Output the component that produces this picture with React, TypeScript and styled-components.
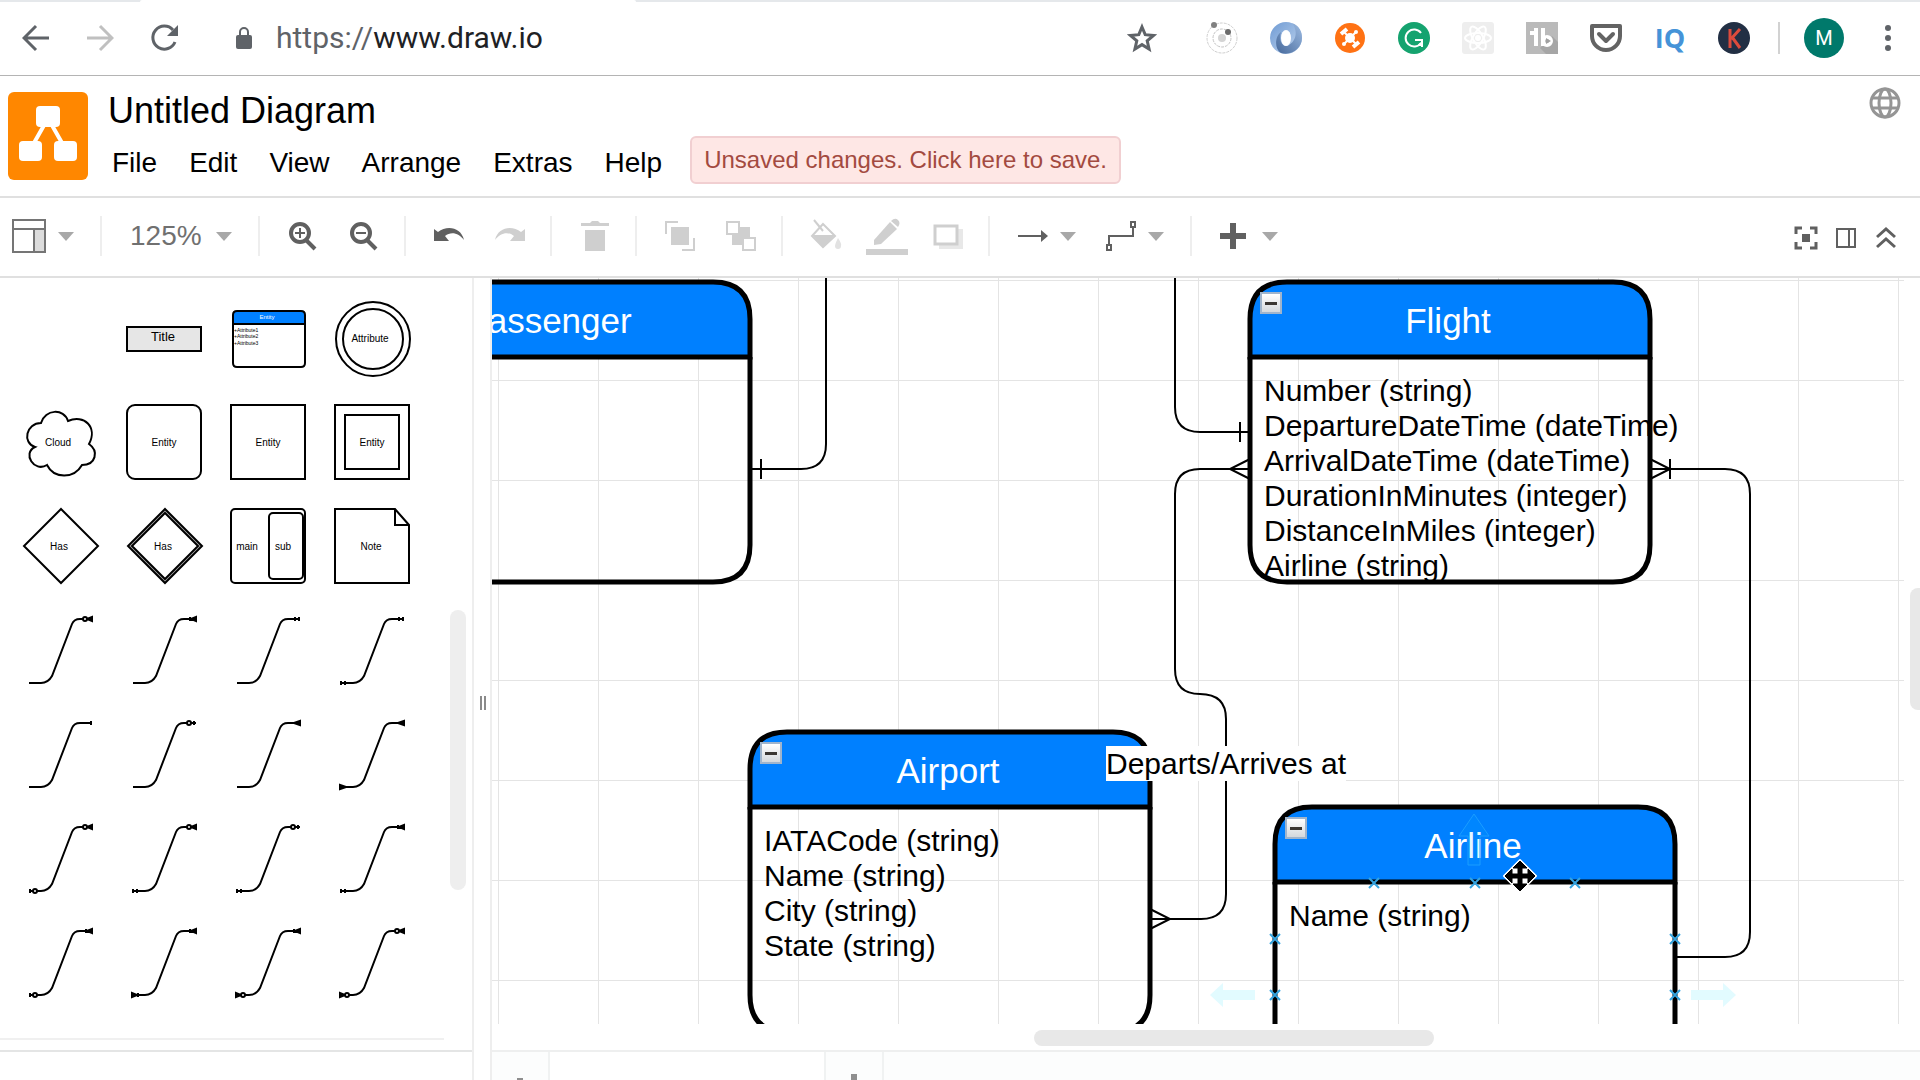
import React from "react";
import styled, { createGlobalStyle } from "styled-components";

const GlobalStyle = createGlobalStyle`
  *, *::before, *::after { box-sizing: border-box; }
  html, body, #root { height: 100%; }
  body {
    margin: 0;
    overflow: hidden;
    background: #ffffff;
    color: #000000;
    font-family: "Liberation Sans", Helvetica, Arial, sans-serif;
  }
  button, select {
    margin: 0;
    padding: 0;
    border: 0;
    background: none;
    color: inherit;
    font: inherit;
    cursor: pointer;
  }
  svg { display: block; flex: none; }
`;

/* ---------- page frame ---------- */

const Page = styled.div`
  display: flex;
  flex-direction: column;
  width: 100%;
  height: 100vh;
`;

const TabStrip = styled.div`
  flex: none;
  height: 2px;
  background: #e5e8eb;
`;

const ActiveTab = styled.div`
  width: 496px;
  height: 2px;
  margin-left: 140px;
  border-radius: 4px 4px 0 0;
  background: #ffffff;
`;

/* ---------- browser bar ---------- */

const BrowserBar = styled.nav`
  display: flex;
  flex: none;
  align-items: center;
  height: 74px;
  padding-left: 4px;
  padding-bottom: 1px;
  border-bottom: 1px solid #b4b4b4;
`;

const BarButton = styled.button<{ $color?: string }>`
  display: flex;
  flex: none;
  align-items: center;
  justify-content: center;
  width: 64px;
  height: 48px;
  color: ${(p) => p.$color ?? "#5f6368"};
`;

const Address = styled.div`
  display: flex;
  flex: 1;
  align-items: center;
  gap: 24px;
  padding-left: 40px;
  color: #5f6368;
`;

const Url = styled.div`
  font-family: Roboto, sans-serif;
  font-size: 30px;
  line-height: 36px;
  white-space: nowrap;
`;

const Host = styled.span`
  color: #202124;
`;

const Extensions = styled.div`
  display: flex;
  align-items: center;
  margin-left: 16px;
`;

const BarDivider = styled.div`
  width: 2px;
  height: 32px;
  margin: 0 12px;
  background: #d2d2d2;
`;

const Avatar = styled.span`
  display: flex;
  align-items: center;
  justify-content: center;
  width: 40px;
  height: 40px;
  border-radius: 50%;
  background: #00796b;
  color: #ffffff;
  font-family: Roboto, sans-serif;
  font-size: 20px;
  line-height: 24px;
`;

const IqMark = styled.span`
  color: #4593d8;
  font-family: "Open Sans", sans-serif;
  font-size: 27px;
  font-weight: 700;
  line-height: 32px;
`;

/* ---------- application header ---------- */

const Header = styled.header`
  display: flex;
  flex: none;
  align-items: flex-start;
  height: 122px;
  padding: 11px 19px 0 8px;
  border-bottom: 2px solid #e0e0e0;
`;

const Logo = styled.a`
  flex: none;
  margin-top: 5px;
`;

const Titles = styled.div`
  display: flex;
  flex: 1;
  flex-direction: column;
  gap: 5px;
  padding: 4px 0 0 20px;
`;

const DocumentTitle = styled.h1`
  margin: 0;
  font-size: 36px;
  font-weight: 400;
  line-height: 40px;
`;

const MenuRow = styled.div`
  display: flex;
  align-items: center;
  gap: 28px;
  height: 48px;
  padding-left: 4px;
`;

const Menus = styled.div`
  display: flex;
  gap: 32px;
  padding-top: 6px;
`;

const MenuButton = styled.button`
  font-size: 28px;
  line-height: 32px;
`;

const SaveNotice = styled.button`
  height: 48px;
  padding: 0 12px;
  border: 2px solid #f1cfd1;
  border-radius: 6px;
  background: #fee7e5;
  color: #a34a40;
  font-size: 24px;
  line-height: 28px;
  white-space: nowrap;
`;

const IconButton = styled.button<{ $color?: string }>`
  display: flex;
  align-items: center;
  justify-content: center;
  color: ${(p) => p.$color ?? "#606060"};
`;

/* ---------- toolbar ---------- */

const Toolbar = styled.div`
  display: flex;
  flex: none;
  align-items: center;
  height: 80px;
  padding-bottom: 2px;
  border-bottom: 2px solid #e0e0e0;
`;

const ToolGroup = styled.div<{ $wide?: boolean }>`
  display: flex;
  align-items: center;
  gap: ${(p) => (p.$wide ? "30px" : "0")};
  height: 40px;
  padding: ${(p) => (p.$wide ? "0 26px 0 28px" : "0 10px 0 12px")};
  border-right: 2px solid #eeeeee;
`;

const LayoutGroup = styled(ToolGroup)`
  width: 102px;
`;

const InsertGroup = styled(ToolGroup)`
  border-right: 0;
`;

const ToolButton = styled.button<{ $dim?: boolean }>`
  display: flex;
  align-items: center;
  justify-content: center;
  width: 61px;
  height: 40px;
  color: ${(p) => (p.$dim ? "#cfcfcf" : "#606060")};
`;

const DropButton = styled.button`
  display: flex;
  align-items: center;
  gap: 12px;
  height: 40px;
  color: #606060;
`;

const ZoomField = styled.label`
  display: flex;
  align-items: center;
  gap: 14px;
  color: #707070;
`;

const ZoomSelect = styled.select`
  width: 72px;
  appearance: none;
  font-size: 28px;
  line-height: 32px;
`;

const ViewTools = styled.div`
  display: flex;
  gap: 16px;
  margin-left: auto;
  padding: 4px 22px 0 0;
`;

/* ---------- workspace ---------- */

const Workspace = styled.main`
  display: flex;
  flex: 1;
  min-height: 0;
`;

const Sidebar = styled.aside`
  display: flex;
  flex: none;
  flex-direction: column;
  width: 474px;
  border-right: 2px solid #eeeeee;
`;

const Palette = styled.div`
  position: relative;
  flex: 1;
  min-height: 0;
  overflow: hidden;
`;

const PaletteSection = styled.section`
  width: 444px;
  padding: 9px 0 23px 8px;
  border-bottom: 2px solid #f0f0f0;
`;

const ShapeGrid = styled.div`
  display: grid;
  grid-template-columns: repeat(4, 104px);
  grid-auto-rows: 104px;
`;

const ShapeButton = styled.button`
  display: flex;
  align-items: center;
  justify-content: center;
`;

const PaletteThumb = styled.div`
  position: absolute;
  top: 332px;
  right: 6px;
  width: 16px;
  height: 280px;
  border-radius: 8px;
  background: #eeeeee;
`;

const SidebarFooter = styled.div`
  flex: none;
  height: 30px;
  border-top: 2px solid #e4e5e5;
`;

const Splitter = styled.div`
  display: flex;
  flex: none;
  align-items: center;
  justify-content: center;
  gap: 2px;
  width: 16px;
  padding: 96px 0 48px 2px;
`;

const SplitterBar = styled.span`
  width: 2px;
  height: 14px;
  background: #8a8a8a;
`;

const Editor = styled.div`
  display: flex;
  flex: 1;
  flex-direction: column;
  min-width: 0;
  border-left: 2px solid #eeeeee;
`;

const EditorRow = styled.div`
  display: flex;
  flex: 1;
  min-height: 0;
`;

const Canvas = styled.div`
  position: relative;
  flex: 1;
  min-width: 0;
  overflow: hidden;
  background-image:
    linear-gradient(to right, #e4e4e4 1px, transparent 1px),
    linear-gradient(to bottom, #e4e4e4 1px, transparent 1px);
  background-size: 100px 100px;
  background-position: 6px 2px;
`;

const Layer = styled.svg`
  position: absolute;
  top: 0;
  left: 0;
  width: 100%;
  height: 100%;
  pointer-events: none;
`;

const VerticalTrack = styled.div`
  flex: none;
  width: 16px;
  padding: 310px 0 0 6px;
`;

const VerticalThumb = styled.div`
  height: 122px;
  border-radius: 8px 0 0 8px;
  background: #e8e8e8;
`;

const HorizontalTrack = styled.div`
  flex: none;
  height: 26px;
  padding: 6px 0 0 542px;
`;

const HorizontalThumb = styled.div`
  width: 400px;
  height: 16px;
  border-radius: 8px;
  background: #e8e8e8;
`;

const PageTabs = styled.div`
  display: flex;
  flex: none;
  height: 30px;
  overflow: hidden;
  border-top: 2px solid #eeefef;
  background: #fcfdfd;
`;

const PageTab = styled.button<{ $width: number; $active?: boolean }>`
  display: flex;
  flex: none;
  align-items: flex-start;
  justify-content: center;
  width: ${(p) => p.$width}px;
  height: 56px;
  border-right: 2px solid #f0f2f2;
  background: ${(p) => (p.$active ? "#ffffff" : "transparent")};
`;

/* ---------- diagram nodes ---------- */

const Node = styled.article<{ $x: number; $y: number }>`
  position: absolute;
  left: ${(p) => p.$x}px;
  top: ${(p) => p.$y}px;
  width: 400px;
  height: 300px;
`;

const NodeFrame = styled.svg`
  position: absolute;
  top: 0;
  left: 0;
  overflow: visible;
`;

const NodeTitle = styled.h2`
  position: relative;
  height: 75px;
  margin: 0;
  padding: 2px 4px 0 0;
  color: #ffffff;
  font-size: 35px;
  font-weight: 400;
  line-height: 74px;
  text-align: center;
`;

const Attributes = styled.ul`
  position: relative;
  height: 224px;
  margin: 0;
  padding: 16px 0 0 14px;
  list-style: none;
  font-size: 30px;
  line-height: 35px;
  white-space: nowrap;
  clip-path: inset(0 -40px 0 0);
`;

const FoldButton = styled.button`
  position: absolute;
  top: 10px;
  left: 10px;
  display: flex;
  align-items: center;
  justify-content: center;
  width: 22px;
  height: 22px;
  border: 2px solid #9fb4cc;
  background: linear-gradient(#ffffff, #d4d8dc);
`;

const FoldDash = styled.span`
  width: 12px;
  height: 3px;
  background: #3a3632;
`;

const EdgeLabel = styled.span`
  position: absolute;
  top: 468px;
  left: 614px;
  background: #ffffff;
  font-size: 30px;
  line-height: 35px;
  white-space: nowrap;
`;

/* ---------- icons ---------- */

const Caret = () => (
  <svg width="16" height="9" viewBox="0 0 16 9" aria-hidden="true">
    <path d="M0 0H16L8 9Z" fill="#a8a8a8" />
  </svg>
);

const BackIcon = () => (
  <svg width="28" height="28" viewBox="0 0 28 28" fill="none" stroke="currentColor" strokeWidth="3">
    <path d="M27 14H3M14 2L2 14L14 26" />
  </svg>
);

const ForwardIcon = () => (
  <svg width="28" height="28" viewBox="0 0 28 28" fill="none" stroke="currentColor" strokeWidth="3">
    <path d="M1 14H25M14 2L26 14L14 26" />
  </svg>
);

const ReloadIcon = () => (
  <svg width="30" height="30" viewBox="0 0 30 30">
    <path d="M26 19A11.500 11.500 0 1 1 24 7" fill="none" stroke="currentColor" strokeWidth="3" />
    <path d="M29 2V13H18Z" fill="currentColor" />
  </svg>
);

const LockIcon = () => (
  <svg width="16" height="22" viewBox="0 0 16 22">
    <rect x="0" y="8" width="16" height="14" rx="2" fill="#5f6368" />
    <path d="M4 9V5A4 4 0 0 1 12 5V9" fill="none" stroke="#5f6368" strokeWidth="2" />
  </svg>
);

const StarIcon = () => (
  <svg width="30" height="30" viewBox="0 0 30 30" fill="none" stroke="currentColor" strokeWidth="3">
    <path d="M15 4L18.200 11.700L26.500 12.400L20.200 17.800L22.100 26L15 21.600L7.900 26L9.800 17.800L3.500 12.400L11.800 11.700Z" />
  </svg>
);

const OrbitIcon = () => (
  <svg width="32" height="32" viewBox="0 0 32 32">
    <circle cx="16" cy="16" r="15" fill="none" stroke="#cfcfcf" strokeWidth="1" strokeDasharray="3 1" />
    <circle cx="16" cy="16" r="9" fill="none" stroke="#c4c4c4" strokeWidth="1" strokeDasharray="3 1" />
    <circle cx="16" cy="16" r="4" fill="#d4d4d4" />
    <circle cx="8" cy="3" r="3" fill="#808080" />
    <circle cx="22" cy="10" r="3" fill="#6a6a6a" />
  </svg>
);

const SwirlIcon = () => (
  <svg width="32" height="32" viewBox="0 0 32 32">
    <defs>
      <linearGradient id="swirl-light" x1="0" y1="0" x2="1" y2="1">
        <stop offset="0" stopColor="#6f9bd4" />
        <stop offset="1" stopColor="#c3d6ee" />
      </linearGradient>
      <linearGradient id="swirl-dark" x1="1" y1="0" x2="0" y2="1">
        <stop offset="0" stopColor="#9dbbe2" />
        <stop offset="1" stopColor="#46699b" />
      </linearGradient>
    </defs>
    <circle cx="16" cy="16" r="16" fill="url(#swirl-light)" />
    <path d="M22 1C30 4 32 10 32 16C32 26 22 34 11 31C4 27 5 14 11 10C9 17 11 24 17 24C27 20 28 8 22 1Z" fill="url(#swirl-dark)" />
    <ellipse cx="16" cy="16" rx="5" ry="8" fill="#ffffff" />
  </svg>
);

const DroneIcon = () => (
  <svg width="32" height="32" viewBox="0 0 32 32">
    <circle cx="16" cy="16" r="15" fill="#ff7214" />
    <circle cx="16" cy="16" r="5" fill="#ffffff" />
    <path d="M10 10L22 22M22 10L10 22" stroke="#ffffff" strokeWidth="2" />
    <path d="M7 12L13 7M19 25L25 20" stroke="#ffffff" strokeWidth="4" />
    <circle cx="22" cy="10" r="2" fill="#ffffff" />
    <circle cx="10" cy="22" r="2" fill="#ffffff" />
  </svg>
);

const GIcon = () => (
  <svg width="32" height="32" viewBox="0 0 32 32">
    <circle cx="16" cy="16" r="16" fill="#15a36f" />
    <path d="M23 11A8.500 8.500 0 1 0 23 21" fill="none" stroke="#ffffff" strokeWidth="2" />
    <path d="M17 18H24V25" fill="none" stroke="#ffffff" strokeWidth="2" />
    <path d="M19 24H25V18Z" fill="#ffffff" />
  </svg>
);

const AtomIcon = () => (
  <svg width="32" height="32" viewBox="0 0 32 32">
    <rect width="32" height="32" rx="3" fill="#eeeeee" />
    <g fill="none" stroke="#ffffff" strokeWidth="2">
      <ellipse cx="16" cy="16" rx="13" ry="5" />
      <ellipse cx="16" cy="16" rx="13" ry="5" transform="rotate(60 16 16)" />
      <ellipse cx="16" cy="16" rx="13" ry="5" transform="rotate(120 16 16)" />
    </g>
    <circle cx="16" cy="16" r="3" fill="#ffffff" />
  </svg>
);

const TubeIcon = () => (
  <svg width="32" height="32" viewBox="0 0 32 32">
    <rect width="32" height="32" fill="#bababa" />
    <path d="M14 26L26 14L32 20V32H20Z" fill="#a6a6a6" />
    <g fill="none" stroke="#ffffff" strokeWidth="4">
      <path d="M4 11H12M10 6V24" />
      <path d="M17 6V24" />
      <circle cx="21" cy="19" r="4" />
    </g>
    <path d="M20 16L25 19L20 22Z" fill="#a0a0a0" />
  </svg>
);

const PocketIcon = () => (
  <svg width="32" height="32" viewBox="0 0 32 32" fill="none" stroke="#636363">
    <path d="M2 4H30V14A14 14 0 0 1 2 14Z" strokeWidth="4" strokeLinejoin="round" />
    <path d="M9 12L16 19L23 12" strokeWidth="4" strokeLinecap="round" strokeLinejoin="round" />
  </svg>
);

const KIcon = () => (
  <svg width="32" height="32" viewBox="0 0 32 32">
    <circle cx="16" cy="16" r="16" fill="#222f44" />
    <path d="M12 7V26M22 7L13 17M14 15L22 26" fill="none" stroke="#dc4b3c" strokeWidth="3" />
  </svg>
);

const DotsIcon = () => (
  <svg width="8" height="28" viewBox="0 0 8 28" fill="currentColor">
    <circle cx="4" cy="4" r="3" />
    <circle cx="4" cy="14" r="3" />
    <circle cx="4" cy="24" r="3" />
  </svg>
);

const LogoIcon = () => (
  <svg width="80" height="88" viewBox="0 0 80 88">
    <rect width="80" height="88" rx="6" fill="#ff8700" />
    <path d="M39 28L22 58M41 28L58 58" stroke="#ffffff" strokeWidth="4" />
    <rect x="28" y="14" width="24" height="21" rx="4" fill="#ffffff" />
    <rect x="11" y="49" width="23" height="20" rx="4" fill="#ffffff" />
    <rect x="46" y="49" width="23" height="20" rx="4" fill="#ffffff" />
  </svg>
);

const GlobeIcon = () => (
  <svg width="32" height="32" viewBox="0 0 32 32" fill="none" stroke="currentColor" strokeWidth="3">
    <circle cx="16" cy="16" r="14" />
    <ellipse cx="16" cy="16" rx="6" ry="14" />
    <path d="M3 11H29M3 21H29" />
  </svg>
);

const LayoutIcon = () => (
  <svg width="34" height="34" viewBox="0 0 34 34">
    <rect x="22" y="10" width="11" height="23" fill="#dcdcdc" />
    <path d="M1 1H33V33H1ZM1 10H33M22 10V33" fill="none" stroke="#757575" strokeWidth="2" />
  </svg>
);

const ZoomIcon = ({ plus }: { plus?: boolean }) => (
  <svg width="30" height="30" viewBox="0 0 30 30" fill="none" stroke="currentColor">
    <circle cx="12" cy="12" r="9" strokeWidth="4" />
    <path d={plus ? "M7 12H17M12 7V17" : "M7 12H17"} strokeWidth="2" />
    <path d="M18 19L27 28" strokeWidth="4" />
  </svg>
);

const UndoIcon = ({ flip }: { flip?: boolean }) => (
  <svg width="32" height="18" viewBox="0 0 32 18" fill="currentColor">
    <path d="M1 2L5 5C14 -2 28 0 31 13C26 6 18 4 12 9L16 14H1Z" transform={flip ? "matrix(-1 0 0 1 32 0)" : undefined} />
  </svg>
);

const TrashIcon = () => (
  <svg width="28" height="30" viewBox="0 0 28 30" fill="currentColor">
    <path d="M0 2H9L11 0H17L19 2H28V5H0ZM4 9H24V30H4Z" />
  </svg>
);

const FrontIcon = () => (
  <svg width="30" height="30" viewBox="0 0 30 30">
    <rect x="6" y="6" width="18" height="18" fill="currentColor" />
    <path d="M1 13V1H13M29 17V29H17" fill="none" stroke="currentColor" strokeWidth="2" />
  </svg>
);

const RearIcon = () => (
  <svg width="30" height="30" viewBox="0 0 30 30">
    <rect x="6" y="6" width="18" height="18" fill="currentColor" />
    <rect x="1" y="1" width="12" height="12" fill="#ffffff" stroke="currentColor" strokeWidth="2" />
    <rect x="17" y="17" width="12" height="12" fill="#ffffff" stroke="currentColor" strokeWidth="2" />
  </svg>
);

const FillIcon = () => (
  <svg width="32" height="34" viewBox="0 0 32 34">
    <path d="M13 5L2 17L13 28L25 17Z" fill="none" stroke="currentColor" strokeWidth="2" />
    <path d="M2 16H25L13 28Z" fill="currentColor" />
    <path d="M4 1L13 12" stroke="currentColor" strokeWidth="2" />
    <path d="M28 19Q32 25 31 27A3 3 0 0 1 25 27Q25 25 28 19Z" fill="#e2e2e2" />
  </svg>
);

const PencilIcon = () => (
  <svg width="42" height="38" viewBox="0 0 42 38" fill="currentColor">
    <path d="M8 23L24 5L31 12L15 27L8 28Z" />
    <path d="M25 4Q29 0 32 3Q35 6 32 10Z" />
    <rect x="0" y="32" width="42" height="6" />
  </svg>
);

const ShadowIcon = () => (
  <svg width="30" height="28" viewBox="0 0 30 28">
    <rect x="6" y="7" width="24" height="20" fill="#e8e8e8" />
    <rect x="2" y="4" width="22" height="18" fill="#ffffff" stroke="currentColor" strokeWidth="3" />
  </svg>
);

const ArrowIcon = () => (
  <svg width="30" height="14" viewBox="0 0 30 14">
    <path d="M0 7H26" stroke="currentColor" strokeWidth="2" />
    <path d="M23 1L30 7L23 13Z" fill="currentColor" />
  </svg>
);

const WaypointIcon = () => (
  <svg width="30" height="32" viewBox="0 0 30 32" fill="none" stroke="currentColor" strokeWidth="2">
    <path d="M3 25V16H27V7" />
    <rect x="1" y="25" width="4" height="5" />
    <rect x="25" y="2" width="4" height="5" />
  </svg>
);

const PlusIcon = () => (
  <svg width="30" height="26" viewBox="0 0 30 26">
    <path d="M0 13H26M13 0V26" stroke="currentColor" strokeWidth="6" />
  </svg>
);

const FitIcon = () => (
  <svg width="24" height="24" viewBox="0 0 24 24">
    <path d="M2 8V2H8M16 2H22V8M22 16V22H16M8 22H2V16" fill="none" stroke="currentColor" strokeWidth="3" />
    <rect x="8" y="8" width="8" height="8" fill="currentColor" />
  </svg>
);

const PanelIcon = () => (
  <svg width="24" height="24" viewBox="0 0 24 24" fill="none" stroke="currentColor" strokeWidth="2">
    <path d="M3 3H21V21H3ZM15 3V21" />
  </svg>
);

const CollapseIcon = () => (
  <svg width="24" height="24" viewBox="0 0 24 24" fill="none" stroke="currentColor" strokeWidth="3">
    <path d="M3 11L12 3L21 11M3 21L12 13L21 21" />
  </svg>
);

/* ---------- palette shapes ---------- */

const ShapeText = styled.text<{ $size?: number }>`
  fill: #000000;
  stroke: none;
  font-size: ${(p) => p.$size ?? 10}px;
  text-anchor: middle;
`;

const AttributeText = styled(ShapeText)`
  text-anchor: start;
`;

const HeadText = styled(ShapeText)`
  fill: #ffffff;
`;

const ShapeSvg = ({ children }: { children: React.ReactNode }) => (
  <svg width="80" height="80" viewBox="-40 -40 80 80" fill="none" stroke="#000000" strokeWidth="2">
    {children}
  </svg>
);

const paletteShapes: { name: string; art: React.ReactNode }[] = [
  {
    name: "Title",
    art: (
      <>
        <rect x="-37" y="-12" width="74" height="24" fill="#e6e6e6" />
        <ShapeText $size={13} x="-1" y="2">Title</ShapeText>
      </>
    ),
  },
  {
    name: "Entity with attributes",
    art: (
      <>
        <path d="M-35 -15V-24Q-35 -28 -31 -28H33Q37 -28 37 -24V-15Z" fill="#0080ff" />
        <path d="M-35 -15V24Q-35 28 -31 28H33Q37 28 37 24V-15" />
        <HeadText $size={6} x="-1" y="-20">Entity</HeadText>
        <AttributeText $size={5} x="-34" y="-7">+Attribute1</AttributeText>
        <AttributeText $size={5} x="-34" y="-1">+Attribute2</AttributeText>
        <AttributeText $size={5} x="-34" y="6">+Attribute3</AttributeText>
      </>
    ),
  },
  {
    name: "Attribute",
    art: (
      <>
        <circle cx="1" r="37" />
        <circle cx="1" r="30" />
        <ShapeText x="-2" y="3">Attribute</ShapeText>
      </>
    ),
  },
  {
    name: "Cloud",
    art: (
      <>
        <path d="M-19 -20C-15 -34 4 -35 8 -22C24 -29 38 -16 29 1C39 8 36 22 22 22C14 36 -6 36 -13 22C-26 30 -38 10 -25 4C-38 0 -34 -20 -19 -20Z" />
        <ShapeText x="-2" y="3">Cloud</ShapeText>
      </>
    ),
  },
  {
    name: "Rounded entity",
    art: (
      <>
        <rect x="-37" y="-38" width="74" height="74" rx="8" />
        <ShapeText x="0" y="3">Entity</ShapeText>
      </>
    ),
  },
  {
    name: "Entity",
    art: (
      <>
        <rect x="-37" y="-38" width="74" height="74" />
        <ShapeText x="0" y="3">Entity</ShapeText>
      </>
    ),
  },
  {
    name: "Weak entity",
    art: (
      <>
        <rect x="-37" y="-38" width="74" height="74" />
        <rect x="-27" y="-28" width="54" height="54" />
        <ShapeText x="0" y="3">Entity</ShapeText>
      </>
    ),
  },
  {
    name: "Relationship",
    art: (
      <>
        <path d="M1 -38L38 -1L1 36L-36 -1Z" />
        <ShapeText x="-1" y="3">Has</ShapeText>
      </>
    ),
  },
  {
    name: "Identifying relationship",
    art: (
      <>
        <path d="M1 -38L38 -1L1 36L-36 -1Z" fill="#b0b0b0" />
        <path d="M1 -34L34 -1L1 32L-32 -1Z" fill="#ffffff" />
        <ShapeText x="-1" y="3">Has</ShapeText>
      </>
    ),
  },
  {
    name: "Main and sub",
    art: (
      <>
        <rect x="-37" y="-38" width="74" height="74" rx="4" />
        <rect x="1" y="-34" width="34" height="66" rx="4" />
        <ShapeText x="-21" y="3">main</ShapeText>
        <ShapeText x="15" y="3">sub</ShapeText>
      </>
    ),
  },
  {
    name: "Note",
    art: (
      <>
        <path d="M-37 -38H23L37 -22V36H-37ZM23 -38V-22H37" />
        <ShapeText x="-1" y="3">Note</ShapeText>
      </>
    ),
  },
];

type End = "one" | "oneOne" | "zeroOne" | "many" | "oneMany" | "zeroMany";

const endings: Record<End, React.ReactNode> = {
  one: <path d="M31 -34V-30" />,
  oneOne: <path d="M31 -34V-30M27 -34V-30" />,
  zeroOne: (
    <>
      <path d="M30 -34V-30" />
      <circle cx="25" cy="-32" r="2" fill="#ffffff" />
    </>
  ),
  many: <path d="M26 -32L32 -34V-30Z" fill="#000000" />,
  oneMany: <path d="M27 -32L32 -34V-30ZM26 -34V-30" fill="#000000" />,
  zeroMany: (
    <>
      <path d="M27 -32L32 -34V-30Z" fill="#000000" />
      <circle cx="25" cy="-32" r="2" fill="#ffffff" />
    </>
  ),
};

const connectors: [End, End?][] = [
  ["zeroMany"], ["oneMany"], ["oneOne"], ["oneOne", "oneOne"],
  ["one"], ["zeroOne"], ["many"], ["many", "many"],
  ["zeroMany", "zeroOne"], ["zeroMany", "oneOne"], ["zeroOne", "oneOne"], ["oneMany", "oneOne"],
  ["oneMany", "zeroOne"], ["oneMany", "oneMany"], ["oneMany", "zeroMany"], ["zeroMany", "zeroMany"],
];

const ConnectorShape = ({ end, start }: { end: End; start?: End }) => (
  <ShapeSvg>
    <path d="M-31 32H-19Q-12 32 -8 25L12 -27Q14 -32 20 -32H32" />
    {endings[end]}
    {start && <g transform="rotate(180)">{endings[start]}</g>}
  </ShapeSvg>
);

/* ---------- diagram ---------- */

interface Entity {
  name: string;
  x: number;
  y: number;
  attributes: string[];
}

const entities: Entity[] = [
  { name: "Passenger", x: -142, y: 4, attributes: [] },
  {
    name: "Flight",
    x: 758,
    y: 4,
    attributes: [
      "Number (string)",
      "DepartureDateTime (dateTime)",
      "ArrivalDateTime (dateTime)",
      "DurationInMinutes (integer)",
      "DistanceInMiles (integer)",
      "Airline (string)",
    ],
  },
  {
    name: "Airport",
    x: 258,
    y: 454,
    attributes: ["IATACode (string)", "Name (string)", "City (string)", "State (string)"],
  },
  { name: "Airline", x: 783, y: 529, attributes: ["Name (string)"] },
];

const EntityNode = ({ name, x, y, attributes }: Entity) => (
  <Node $x={x} $y={y}>
    <NodeFrame width="400" height="300" viewBox="0 0 400 300" stroke="#000000" strokeWidth="5">
      <path d="M0 75V37Q0 0 37 0H363Q400 0 400 37V75Z" fill="#0080ff" />
      <path d="M0 75V263Q0 300 37 300H363Q400 300 400 263V75" fill="none" />
    </NodeFrame>
    <NodeTitle>{name}</NodeTitle>
    <Attributes>
      {attributes.map((a) => (
        <li key={a}>{a}</li>
      ))}
    </Attributes>
    <FoldButton aria-label={`Collapse ${name}`}>
      <FoldDash />
    </FoldButton>
  </Node>
);

const anchors = [
  [882, 605], [983, 605], [1083, 605],
  [783, 661], [783, 717], [1183, 661], [1183, 717],
];

const Relations = () => (
  <Layer fill="none" stroke="#000000" strokeWidth="2">
    <path d="M258 191H309Q334 191 334 166V0M269 181V201" />
    <path d="M683 0V129Q683 154 708 154H758M748 144V164" />
    <path d="M758 191H708Q683 191 683 216V391Q683 416 708 416Q734 416 734 441V616Q734 641 709 641H658" />
    <path d="M758 181L738 191L758 201M658 631L678 641L658 651" />
    <path d="M1158 191H1233Q1258 191 1258 216V654Q1258 679 1233 679H1183" />
    <path d="M1158 181L1178 191L1158 201M1178 181V201" />
  </Layer>
);

const HoverMarks = () => (
  <Layer fill="none">
    <path d="M718 717L731 705V712H763V722H731V729Z" fill="#e2fbff" />
    <path d="M1244 717L1231 705V712H1199V722H1231V729Z" fill="#e2fbff" />
    <path d="M982 536L997 558H988V587H976V558H967Z" fill="#00bfff" fillOpacity="0.1" stroke="#1a9dff" strokeWidth="1" />
    {anchors.map(([x, y]) => (
      <path key={`${x}-${y}`} d={`M${x - 5} ${y - 5}l10 10m0 -10l-10 10`} stroke="#35a4e0" strokeWidth="2" />
    ))}
    <g transform="translate(1028 598)" stroke="#ffffff" strokeWidth="2" strokeLinejoin="round">
      <path d="M0 -16L16 0L0 16L-16 0Z" fill="#ffffff" />
      <path
        d="M0 -15L7 -8H2V-2H8V-7L15 0L8 7V2H2V8H7L0 15L-7 8H-2V2H-8V7L-15 0L-8 -7V-2H-2V-8H-7Z"
        fill="#000000"
        stroke="#000000"
        strokeWidth="1"
      />
    </g>
  </Layer>
);

const menuNames = ["File", "Edit", "View", "Arrange", "Extras", "Help"];

const extensions: [string, React.ReactNode][] = [
  ["Orbit", <OrbitIcon />],
  ["Swirl", <SwirlIcon />],
  ["Drone", <DroneIcon />],
  ["Grammar check", <GIcon />],
  ["Component inspector", <AtomIcon />],
  ["Video tools", <TubeIcon />],
  ["Save to reading list", <PocketIcon />],
  ["Keyword tool", <IqMark>IQ</IqMark>],
  ["Keyword search", <KIcon />],
];

export default function App() {
  return (
    <Page>
      <GlobalStyle />
      <TabStrip>
        <ActiveTab />
      </TabStrip>
      <BrowserBar>
        <BarButton aria-label="Back"><BackIcon /></BarButton>
        <BarButton aria-label="Forward" $color="#c0c0c0"><ForwardIcon /></BarButton>
        <BarButton aria-label="Reload"><ReloadIcon /></BarButton>
        <Address>
          <LockIcon />
          <Url role="textbox" aria-label="Address" contentEditable suppressContentEditableWarning>
            https://<Host>www.draw.io</Host>
          </Url>
        </Address>
        <BarButton aria-label="Bookmark"><StarIcon /></BarButton>
        <Extensions>
          {extensions.map(([name, icon]) => (
            <BarButton key={name} aria-label={name}>{icon}</BarButton>
          ))}
        </Extensions>
        <BarDivider />
        <BarButton aria-label="Profile"><Avatar>M</Avatar></BarButton>
        <BarButton aria-label="Browser menu"><DotsIcon /></BarButton>
      </BrowserBar>

      <Header>
        <Logo href="#home" aria-label="Home"><LogoIcon /></Logo>
        <Titles>
          <DocumentTitle>Untitled Diagram</DocumentTitle>
          <MenuRow>
            <Menus>
              {menuNames.map((m) => (
                <MenuButton key={m}>{m}</MenuButton>
              ))}
            </Menus>
            <SaveNotice>Unsaved changes. Click here to save.</SaveNotice>
          </MenuRow>
        </Titles>
        <IconButton aria-label="Language" $color="#959595"><GlobeIcon /></IconButton>
      </Header>

      <Toolbar>
        <LayoutGroup>
          <DropButton aria-label="Layout"><LayoutIcon /><Caret /></DropButton>
        </LayoutGroup>
        <ToolGroup $wide>
          <ZoomField>
            <ZoomSelect aria-label="Zoom" defaultValue="125%">
              <option>125%</option>
            </ZoomSelect>
            <Caret />
          </ZoomField>
        </ToolGroup>
        <ToolGroup>
          <ToolButton aria-label="Zoom in"><ZoomIcon plus /></ToolButton>
          <ToolButton aria-label="Zoom out"><ZoomIcon /></ToolButton>
        </ToolGroup>
        <ToolGroup>
          <ToolButton aria-label="Undo"><UndoIcon /></ToolButton>
          <ToolButton aria-label="Redo" $dim><UndoIcon flip /></ToolButton>
        </ToolGroup>
        <ToolGroup>
          <ToolButton aria-label="Delete" $dim><TrashIcon /></ToolButton>
        </ToolGroup>
        <ToolGroup>
          <ToolButton aria-label="To front" $dim><FrontIcon /></ToolButton>
          <ToolButton aria-label="To back" $dim><RearIcon /></ToolButton>
        </ToolGroup>
        <ToolGroup>
          <ToolButton aria-label="Fill color" $dim><FillIcon /></ToolButton>
          <ToolButton aria-label="Line color" $dim><PencilIcon /></ToolButton>
          <ToolButton aria-label="Shadow" $dim><ShadowIcon /></ToolButton>
        </ToolGroup>
        <ToolGroup $wide>
          <DropButton aria-label="Connection"><ArrowIcon /><Caret /></DropButton>
          <DropButton aria-label="Waypoints"><WaypointIcon /><Caret /></DropButton>
        </ToolGroup>
        <InsertGroup $wide>
          <DropButton aria-label="Insert"><PlusIcon /><Caret /></DropButton>
        </InsertGroup>
        <ViewTools>
          <IconButton aria-label="Fullscreen"><FitIcon /></IconButton>
          <IconButton aria-label="Format panel"><PanelIcon /></IconButton>
          <IconButton aria-label="Collapse header"><CollapseIcon /></IconButton>
        </ViewTools>
      </Toolbar>

      <Workspace>
        <Sidebar>
          <Palette>
            <PaletteSection>
              <ShapeGrid>
                <ShapeButton aria-label="Blank" />
                {paletteShapes.map((s) => (
                  <ShapeButton key={s.name} aria-label={s.name}>
                    <ShapeSvg>{s.art}</ShapeSvg>
                  </ShapeButton>
                ))}
                {connectors.map(([end, start], i) => (
                  <ShapeButton key={i} aria-label={`Connector ${i + 1}`}>
                    <ConnectorShape end={end} start={start} />
                  </ShapeButton>
                ))}
              </ShapeGrid>
            </PaletteSection>
            <PaletteThumb />
          </Palette>
          <SidebarFooter />
        </Sidebar>
        <Splitter>
          <SplitterBar />
          <SplitterBar />
        </Splitter>
        <Editor>
          <EditorRow>
            <Canvas>
              <Relations />
              {entities.map((e) => (
                <EntityNode key={e.name} {...e} />
              ))}
              <EdgeLabel>Departs/Arrives at</EdgeLabel>
              <HoverMarks />
            </Canvas>
            <VerticalTrack>
              <VerticalThumb />
            </VerticalTrack>
          </EditorRow>
          <HorizontalTrack>
            <HorizontalThumb />
          </HorizontalTrack>
          <PageTabs>
            <PageTab $width={58} aria-label="Pages">
              <svg width="6" height="40" viewBox="0 0 6 40"><path d="M0 26H6V32H0Z" fill="#8f8f8f" /></svg>
            </PageTab>
            <PageTab $width={276} $active aria-label="Current page" />
            <PageTab $width={58} aria-label="Add page">
              <svg width="6" height="40" viewBox="0 0 6 40"><path d="M0 22H6V40H0Z" fill="#8f8f8f" /></svg>
            </PageTab>
          </PageTabs>
        </Editor>
      </Workspace>
    </Page>
  );
}
